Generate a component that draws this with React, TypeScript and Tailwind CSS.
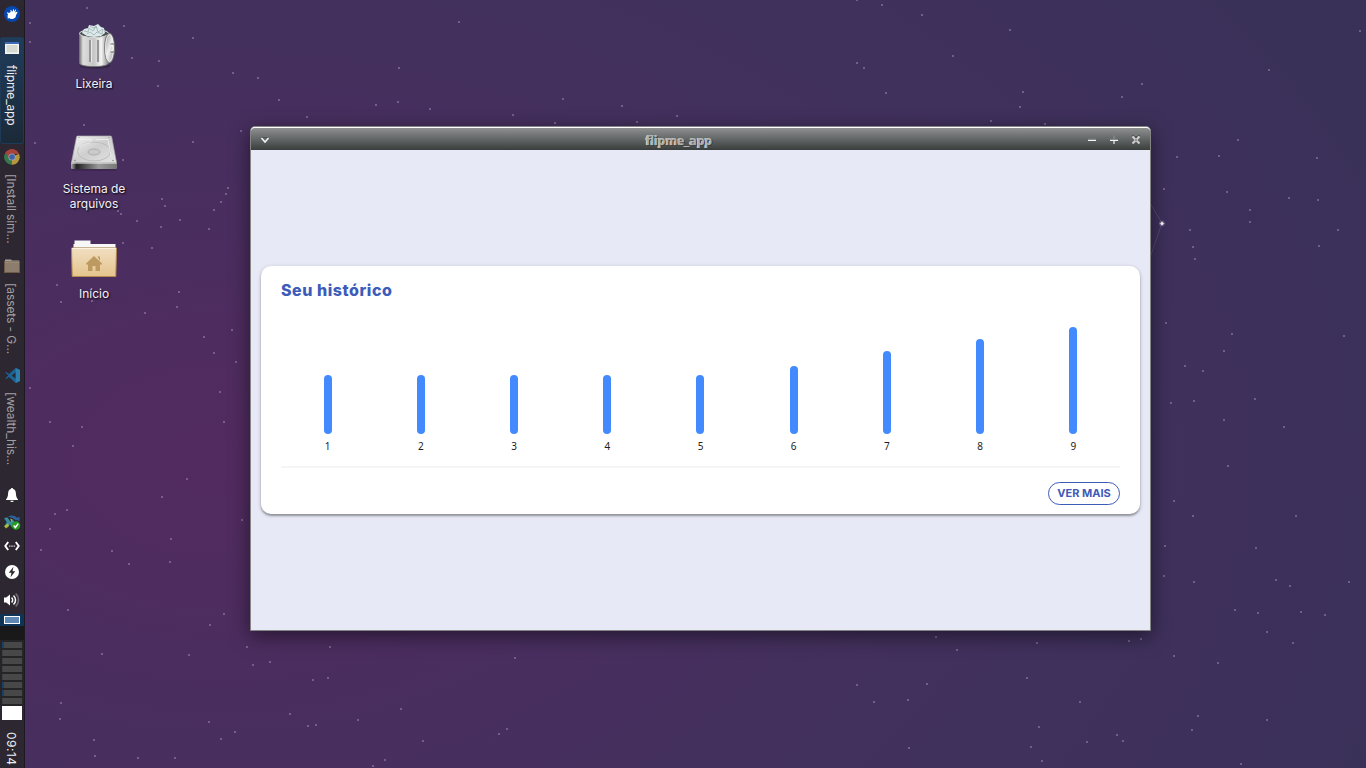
import React from "react";

const STARS: [number, number][] = [
  [87, 8], [30, 23], [124, 26], [30, 42], [193, 38], [132, 58], [159, 61], [233, 73], [258, 78], [158, 86],
  [279, 100], [307, 117], [241, 131], [376, 105], [398, 102], [399, 68], [430, 109], [459, 22], [513, 115],
  [563, 99], [555, 123], [622, 106], [637, 122], [677, 116], [84, 125], [35, 143], [193, 142], [123, 160],
  [228, 188], [226, 194], [221, 202], [214, 210], [162, 199], [165, 206], [118, 211], [121, 214], [137, 221],
  [180, 220], [161, 227], [209, 229], [123, 243], [152, 248], [57, 285], [179, 292], [61, 302], [92, 301],
  [177, 307], [145, 313], [232, 330], [204, 337], [214, 353], [236, 362],
  [857, 0], [882, 5], [922, 15], [1010, 30], [953, 56], [857, 63], [864, 68], [886, 93], [1023, 92], [1142, 84],
  [1122, 97], [1020, 107], [991, 121], [1045, 124], [1360, 31], [1269, 70], [1238, 140], [1177, 157],
  [1219, 156], [1317, 158], [1164, 189], [1227, 192], [1289, 198], [1318, 200], [1250, 210], [1250, 222],
  [1190, 230], [1193, 247], [1195, 259], [1338, 230], [1319, 246], [1166, 323], [1232, 334], [1344, 336],
  [1224, 351], [1185, 366], [1203, 371],
  [1171, 403], [1194, 401], [1255, 399], [1224, 420], [1284, 427], [1228, 466], [1174, 501], [1193, 516],
  [1296, 516], [1165, 546], [1256, 548], [1164, 576], [1194, 582], [1276, 580], [1290, 586], [1349, 582],
  [1235, 610], [1258, 613], [1301, 612], [1325, 615], [1267, 632], [1293, 643], [936, 637], [957, 650],
  [1037, 643], [1129, 641], [1141, 639], [1174, 656], [1218, 663], [857, 685], [927, 684], [1027, 678],
  [874, 702], [908, 700], [1080, 702], [1198, 716], [1192, 730], [1267, 720], [1039, 727], [1117, 735],
  [1123, 741], [1087, 742], [909, 748], [1031, 747], [1042, 761], [1241, 764],
  [30, 388], [220, 392], [50, 422], [82, 427], [224, 422], [73, 446], [187, 479], [162, 497], [67, 510],
  [55, 514], [242, 520], [50, 529], [171, 539], [41, 550], [112, 551], [170, 562], [129, 564], [68, 610],
  [224, 614], [210, 625], [247, 647], [330, 647], [102, 654], [189, 655], [270, 662], [253, 665], [313, 680],
  [328, 678], [515, 658], [61, 703], [60, 719], [290, 714], [209, 722], [308, 726], [316, 725], [358, 720],
  [401, 709], [235, 732], [221, 739], [94, 740], [95, 756], [138, 758], [175, 758], [385, 760], [373, 766],
  [423, 741], [499, 734], [507, 729],
];

const Wallpaper = () => (
  <svg className="absolute inset-0" width="1366" height="768" aria-hidden="true">
    {STARS.map(([x, y], i) => (
      <rect key={i} x={x - 1} y={y - 1} width="2" height="2" fill="#b4a3c4" opacity="0.42" />
    ))}
    <path d="M1150 203 L1162 223 L1150 258" fill="none" stroke="#a99bb5" strokeOpacity="0.22" />
    <circle cx="1162" cy="223.5" r="3" fill="#cfc3da" opacity="0.22" />
    <path d="M1162 221v5M1159.500 223.5h5" stroke="#d9d0e1" strokeOpacity="0.5" />
    <circle cx="1162" cy="223.5" r="1.5" fill="#fff" />
  </svg>
);

const MouseLogo = () => (
  <svg width="16" height="16" viewBox="0 0 16 16">
    <circle cx="8" cy="8" r="8" fill="#0647ad" />
    <path d="M3.300 6c.8.200 1.200.6 1.600 1.200.5-.6 1.100-1 1.800-1.200l-.3-2.300c.9.100 1.300.8 1.500 1.800l.8.100.6-2.500c.8.300.9 1.300.7 2.300l1.900-2.200c.5.900-.2 2.100-1 3.100 1 .2 1.700-.1 2.500-.7 0 1.600-.6 2.700-1.400 3.300.2 2-1 3.300-2.900 3.800-1.500.4-3 .1-4.200-.7l-1 .7c-.3-1.700-.4-3.200.1-4.200-.6-.6-.8-1.600-.7-2.500z" fill="#fff" />
  </svg>
);

const WindowIcon = () => (
  <svg width="14" height="12" viewBox="0 0 14 12">
    <rect width="14" height="12" fill="#f5f6f4" />
    <rect width="14" height="2" fill="#3b6cb5" />
    <rect x="1.5" y="3" width="11" height="7.5" fill="#d8dad4" />
  </svg>
);

const ChromeIcon = () => (
  <svg width="16" height="16" viewBox="0 0 16 16">
    <path d="M8 8 1.5 3.7A7.6 7.6 0 0 1 14.9 4.8H8z" fill="#a8443c" />
    <path d="M8 8 14.9 4.8A7.6 7.6 0 0 1 7.2 15.6z" fill="#b6973c" />
    <path d="M8 8 7.2 15.6A7.6 7.6 0 0 1 1.5 3.7z" fill="#34784c" />
    <path d="M8 4.8h6.9A7.6 7.6 0 0 0 1.5 3.7L5 9z" fill="#a8443c" />
    <circle cx="8" cy="8" r="3.6" fill="#a9a5a8" />
    <circle cx="8" cy="8" r="2.8" fill="#3c64ac" />
  </svg>
);

const SmallFolder = () => (
  <svg width="16" height="14" viewBox="0 0 16 14">
    <path d="M1 3V.5h6l1 1h7V4H1z" fill="#a5a1a0" />
    <rect x=".5" y="2.5" width="15" height="11" fill="#8c7d6d" stroke="#6d5b45" />
    <path d="M1 3h14" stroke="#a29483" />
  </svg>
);

const CodeIcon = () => (
  <svg width="15" height="15" viewBox="0 0 15 15">
    <path d="M10.7 0 15 2v11l-4.3 2L4 8.9 1.4 11 .3 10.4 3.2 7.5.3 4.6 1.4 4 4 6.1zM10.8 4.3 6.7 7.5l4.1 3.2z" fill="#1c6494" fillRule="evenodd" />
    <path d="M10.7 0 15 2v11l-4.3 2z" fill="#2c7eae" />
  </svg>
);

const BellIcon = () => (
  <svg width="12" height="14" viewBox="0 0 12 14">
    <path d="M6 0c.7 0 1 .4 1.1 1 1.9.5 2.7 2 2.8 4.3.1 2.6.4 4 2.1 6.1v.6H0v-.6c1.7-2.1 2-3.5 2.1-6.1C2.2 3 3 1.5 4.900 1 5 .4 5.300 0 6 0zM4.200 12.700h3.600C7.400 13.700 6.700 14 6 14s-1.400-.3-1.800-1.300z" fill="#fff" />
  </svg>
);

const UpdaterIcon = () => (
  <svg width="17" height="15" viewBox="0 0 17 15">
    <path d="M4 1.600c3-1.800 7-1.400 9 1.200l2.700-.8-.4 4.500-2-1.500-1.600.6C10.200 3.800 8 2.800 4 1.600z" fill="#2d5f9c" />
    <path d="m0 3.200 3.200-1 3.500 4.500 2.100-2.400 2 3.500L8 12.500 6 9.500l-3 3-2.500-1L2.700 7z" fill="#388ca0" />
    <path d="m0 11 4-2.500 1 2.500-3 2.500zM6 3.500l2.400 1-.4 3z" fill="#a8bd3a" />
    <circle cx="12" cy="10.500" r="4.300" fill="#279c24" />
    <path d="m9.700 10.600 1.700 1.900 2.800-3.900" stroke="#fff" strokeWidth="1.500" fill="none" />
  </svg>
);

const NetworkIcon = () => (
  <svg width="16" height="10" viewBox="0 0 16 10">
    <path d="M4.200 1 1.300 5l2.900 4M11.800 1l2.900 4-2.900 4" stroke="#fff" strokeWidth="1.900" fill="none" />
    <path d="M5 4.400h1.500v1.400H5zM7.300 4.400h1.500v1.400H7.300zM9.600 4.400h1.500v1.400H9.600z" fill="#d0ced1" />
  </svg>
);

const PowerIcon = () => (
  <svg width="14" height="14" viewBox="0 0 14 14">
    <circle cx="7" cy="7" r="7" fill="#fff" />
    <path d="M8.500 1.700 3.800 7.700h2.700l-1 4.600 4.800-6H7.500z" fill="#2c2730" />
  </svg>
);

const VolumeIcon = () => (
  <svg width="16" height="14" viewBox="0 0 16 14">
    <path d="M0 4.500h2.200L6 1.500v11l-3.800-3H0z" fill="#fff" />
    <path d="M7.600 4.500a3.500 3.500 0 0 1 0 5M9.500 2.500a6 6 0 0 1 0 9" stroke="#fff" strokeWidth="1.500" fill="none" />
    <path d="M11.700.5a9 9 0 0 1 0 13" stroke="#747078" strokeWidth="1.500" fill="none" />
  </svg>
);

const TrashIcon = () => (
  <svg width="48" height="48" viewBox="0 0 48 48">
    <defs>
      <linearGradient id="can">
        <stop stopColor="#777" /><stop offset=".12" stopColor="#ddd" /><stop offset=".5" stopColor="#c6c6c6" />
        <stop offset=".75" stopColor="#f4f4f4" /><stop offset="1" stopColor="#858585" />
      </linearGradient>
      <linearGradient id="lid" x2="1" y2="1"><stop stopColor="#8d8d8d" /><stop offset=".5" stopColor="#eee" /><stop offset="1" stopColor="#969696" /></linearGradient>
    </defs>
    <ellipse cx="25" cy="44" rx="15" ry="2.500" fill="#000" opacity=".25" />
    <path d="M9.500 11.500c0-5 29-5 29 0v29.500c0 4.800-29 4.800-29 0z" fill="url(#can)" stroke="#747474" />
    <ellipse cx="24" cy="11.500" rx="14.500" ry="4" fill="#4c5152" stroke="#dadada" />
    <path d="m12 11 2-4 4-1 1-3 5 1 4-2 3 3 3 1 1 5-4 3-7 1-7-1z" fill="#dce9ea" />
    <path d="m14 9 4 1 1-4 4 3 3-5 2 6 5-3-1 5-5-2-3 3-4-3-3 2M20 4l3 2 4-1" fill="none" stroke="#93a8ab" strokeWidth=".7" />
    <path d="M20 18v22M28 18v22" stroke="#969696" strokeWidth="2" />
    <path d="M21.500 18v22M29.500 18v22" stroke="#e8e8e8" />
    <ellipse cx="39.500" cy="26" rx="5" ry="14.800" fill="url(#lid)" stroke="#707070" strokeWidth=".8" />
    <ellipse cx="39.500" cy="26" rx="3.900" ry="13.300" fill="none" stroke="#f1f1f1" strokeWidth=".8" />
    <path d="M40.500 22h4v8h-4" fill="none" stroke="#6c6c6c" strokeWidth="1.200" />
    <path d="M41 23.500h2v5h-2" fill="none" stroke="#fff" strokeWidth=".8" />
  </svg>
);

const DriveIcon = () => (
  <svg width="48" height="48" viewBox="0 0 48 48">
    <defs>
      <linearGradient id="drive" x2="1" y2="1"><stop stopColor="#f4f4f4" /><stop offset=".5" stopColor="#cecece" /><stop offset="1" stopColor="#e4e4e4" /></linearGradient>
      <linearGradient id="front"><stop stopColor="#b0b0b0" /><stop offset=".12" stopColor="#222" /><stop offset=".6" stopColor="#999" /><stop offset="1" stopColor="#777" /></linearGradient>
    </defs>
    <g transform="translate(0 1.500)">
      <path d="M2 41h44v1H2z" fill="#000" opacity=".3" />
      <path d="M7.500 7.500h33c.6 0 1 .4 1.200 1L46.500 34H1.500l5-25.500c.1-.6.500-1 1-1z" fill="url(#drive)" stroke="#a9a9a9" strokeWidth=".7" />
      <path d="M1 34h46v5c0 1-.5 1.500-1.500 1.500h-43C1.500 40.500 1 40 1 39z" fill="url(#front)" />
      <path d="M1.500 34.500h45" stroke="#f6f6f6" />
      <ellipse cx="24" cy="23" rx="16.500" ry="9.500" fill="none" stroke="#b6b6b6" strokeWidth=".8" />
      <ellipse cx="24" cy="23.500" rx="6" ry="3" fill="#cacaca" stroke="#a5a5a5" strokeWidth=".8" />
      <path d="M9.500 11h12c1 5-9 3-12 8M26 11h12l3 17" fill="none" stroke="#f0f0f0" strokeWidth=".8" />
      <circle cx="5" cy="32" r=".7" fill="#777" /><circle cx="43" cy="32" r=".7" fill="#777" />
      <circle cx="9" cy="9" r=".6" fill="#888" /><circle cx="39" cy="9" r=".6" fill="#888" />
    </g>
  </svg>
);

const HomeFolderIcon = () => (
  <svg width="48" height="48" viewBox="0 0 48 48">
    <defs><linearGradient id="folder" x2="0" y2="1"><stop stopColor="#f1dec1" /><stop offset="1" stopColor="#e5c48d" /></linearGradient></defs>
    <g transform="translate(0 4)">
      <path d="M3.500 12V8h1V4.500h16V8h25v5h-42z" fill="#f7f7f7" />
      <path d="M3.500 11.500h42" stroke="#d7d7d7" />
      <path d="M1.500 12h45l-.7 28.500H2.200z" fill="url(#folder)" stroke="#b48a4d" />
      <path d="M2 12.500h44" stroke="#fbf0dd" />
      <path d="M24 20 32 27.500v1h-2V35h-4.500v-5h-3v5H18v-6.500h-2v-1zM27.500 20.500H30V25z" fill="#bd9a60" />
    </g>
  </svg>
);

const Task = ({ icon, label }: { icon: React.ReactNode; label: string }) => (
  <div className="flex h-[109px] w-6 flex-col items-center pt-1.5">
    <div className="flex h-4 items-center justify-center">{icon}</div>
    <span className="mt-[9px] mr-0.5 whitespace-nowrap text-xs leading-[22px] tracking-[-0.1px] text-[#a29fa3] [writing-mode:vertical-rl]">{label}</span>
  </div>
);

const Panel = () => (
  <aside className="relative flex h-full w-[25px] flex-none flex-col border-r border-[#1d1922] bg-[#2c2730]">
    <div className="flex h-[37px] justify-center pt-1.5"><MouseLogo /></div>
    <div className="flex h-[107px] w-6 flex-col items-center rounded-xs border border-[#1e3a56] bg-linear-to-b from-[#203c5b] to-[#1b2a38] pt-1">
      <WindowIcon />
      <span className="mr-0.5 mt-[11px] whitespace-nowrap text-xs leading-[22px] tracking-[-0.15px] text-[#eeeef0] [writing-mode:vertical-rl]">flipme_app</span>
    </div>
    <div className="mt-[-1px]"><Task icon={<ChromeIcon />} label="[Install sim..." /></div>
    <Task icon={<SmallFolder />} label="[assets - G..." />
    <Task icon={<CodeIcon />} label="[wealth_his..." />
    <div className="mt-[11px] flex h-7 items-center justify-center"><BellIcon /></div>
    <div className="flex h-[26px] items-center justify-center"><UpdaterIcon /></div>
    <div className="flex h-[22px] items-center justify-center"><NetworkIcon /></div>
    <div className="flex h-[29px] items-center justify-center"><PowerIcon /></div>
    <div className="mb-px flex h-[27px] items-center justify-center"><VolumeIcon /></div>
    <div className="flex h-3 items-center justify-center bg-[#0e3558]"><div className="h-2 w-4 border border-white bg-[#5f88b5]" /></div>
    <div className="h-[14px] bg-[#191919]" />
    <div className="flex h-[66px] flex-col gap-0.5 bg-[#252426] px-0.5 pt-0.5">
      {[0, 1, 2, 3, 4, 5, 6, 7].map((n) => (
        <div key={n} className="flex h-1.5 w-5 bg-[#484848]">
          <div className={n === 0 || n === 5 || n === 6 ? "w-0.5 bg-[#17406a]" : "w-px bg-[#414044]"} />
        </div>
      ))}
    </div>
    <div className="ml-0.5 h-[14px] w-5 flex-none bg-white" />
    <span className="mr-0.5 mt-3 whitespace-nowrap text-xs leading-[22px] tracking-[0.5px] text-[#eeeef0] [writing-mode:vertical-rl]">09:14</span>
  </aside>
);

const DesktopIcon = ({ icon, lines }: { icon: React.ReactNode; lines: string[] }) => (
  <div className="flex h-[105px] w-full flex-col items-center">
    {icon}
    <div className="mt-1.5 text-center text-xs leading-[15px] text-[#f4f2f6] [text-shadow:1px_1px_2px_#000]">
      {lines.map((l) => <div key={l}>{l}</div>)}
    </div>
  </div>
);

const BARS = [59.5, 59.5, 59.5, 59.5, 59.5, 68.5, 83.5, 95.5, 107.5];

const HistoryCard = () => (
  <section className="h-[248px] w-[879px] rounded-[10px] bg-white px-5 pt-[14px] shadow-[0_2px_2px_rgba(0,0,0,0.28),0_1px_4px_rgba(0,0,0,0.2)]">
    <h1 className="h-[39px] text-[16px] font-extrabold leading-5 tracking-[0.55px] text-[#3d5bb8]">Seu histórico</h1>
    <div className="grid h-[139px] grid-cols-9">
      {BARS.map((h, i) => (
        <div key={i} className="flex h-full flex-col items-center justify-end">
          <div className="w-2 rounded-full bg-[#448aff]" style={{ height: h }} />
          <span className="mb-1 mt-1 h-4 font-['Noto_Sans',sans-serif] text-[10px] leading-4 text-[#222]">{i + 1}</span>
        </div>
      ))}
    </div>
    <div className="mt-2 h-0.5 bg-[#f5f5f5]" />
    <div className="mt-[14px] flex justify-end">
      <button className="h-[23px] w-[72px] rounded-full border border-[#3d5bb8] text-[11px] font-bold leading-[21px] text-[#3d5bb8]">VER MAIS</button>
    </div>
  </section>
);

const AppWindow = () => (
  <main className="absolute left-[250px] top-[126px] flex h-[505px] w-[901px] flex-col rounded-t-[5px] border border-[#858585] bg-[#e7eaf6] shadow-[0_5px_20px_rgba(0,0,0,0.5)]">
    <header className="flex h-[23px] flex-none items-center rounded-t-[4px] border-t border-white bg-linear-to-b from-[#8f9191] to-[#3a3f3e] pl-2 pr-[9px]">
      <svg width="12" height="12" viewBox="0 0 12 12" className="mt-0.5"><path d="m2.500 4 3.500 4 3.500-4" fill="none" stroke="#f5f5f5" strokeWidth="1.500" /><path d="M3.500 3.500h5" stroke="#4e5251" /></svg>
      <div className="flex-1 pt-1 text-center font-['Noto_Sans',sans-serif] text-xs font-bold leading-[18px] tracking-[0.1px] text-[#aeb0af] [text-shadow:1px_1px_0_#3d403f,-1px_0_0_#d2d2d0]">flipme_app</div>
      <svg width="54" height="12" viewBox="0 0 54 12" className="mt-px">
        <path d="M1 5.500h8M27 1.500v8M23 5.500h8" stroke="#858886" strokeWidth="1.500" />
        <path d="M1 6.500h8M23 6.500h8M27 6v4" stroke="#f4f4f4" strokeWidth="1" />
        <path d="m45.500 2.500 7 7m0-7-7 7" stroke="#d0d1cf" strokeWidth="2" />
        <path d="M45.500 1.500h1m5 0h1M48 3h2" stroke="#303432" />
        <path d="M48 6h2" stroke="#929492" strokeWidth="2" />
      </svg>
    </header>
    <div className="flex flex-1 justify-center pt-[116px]"><HistoryCard /></div>
  </main>
);

export default function App() {
  return (
    <div className="relative flex h-[768px] w-[1366px] overflow-hidden bg-[radial-gradient(ellipse_1150px_750px_at_220px_460px,#522b60_0%,#4e2c5f_18%,#482e5f_38%,#43305d_60%,#3f305c_82%,#3a3159_108%)] font-[Inter,sans-serif]">
      <Wallpaper />
      <Panel />
      <div className="relative flex w-[138px] flex-col pt-[22px]">
        <DesktopIcon icon={<TrashIcon />} lines={["Lixeira"]} />
        <DesktopIcon icon={<DriveIcon />} lines={["Sistema de", "arquivos"]} />
        <DesktopIcon icon={<HomeFolderIcon />} lines={["Início"]} />
      </div>
      <AppWindow />
    </div>
  );
}
